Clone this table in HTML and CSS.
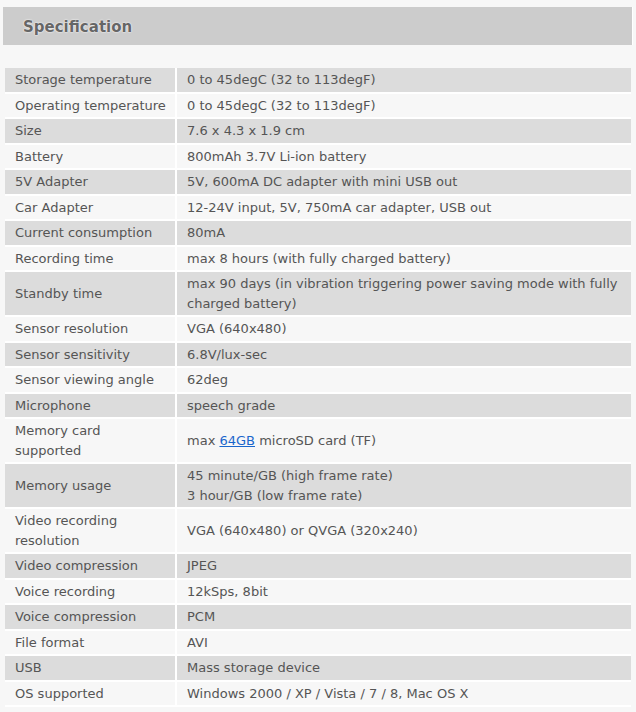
FILE: index.html
```html
<!DOCTYPE html>
<html>
<head>
<meta charset="utf-8">
<link rel="stylesheet" href="styles.css">
</head>
<body>
<h2 class="spec-title">Specification</h2>
<table class="spec-table">
<tr><td class="k">Storage temperature</td><td>0 to 45degC (32 to 113degF)</td></tr>
<tr><td class="k">Operating temperature</td><td>0 to 45degC (32 to 113degF)</td></tr>
<tr><td class="k">Size</td><td>7.6 x 4.3 x 1.9 cm</td></tr>
<tr><td class="k">Battery</td><td>800mAh 3.7V Li-ion battery</td></tr>
<tr><td class="k">5V Adapter</td><td>5V, 600mA DC adapter with mini USB out</td></tr>
<tr><td class="k">Car Adapter</td><td>12-24V input, 5V, 750mA car adapter, USB out</td></tr>
<tr><td class="k">Current consumption</td><td>80mA</td></tr>
<tr><td class="k">Recording time</td><td>max 8 hours (with fully charged battery)</td></tr>
<tr><td class="k">Standby time</td><td>max 90 days (in vibration triggering power saving mode with fully charged battery)</td></tr>
<tr><td class="k">Sensor resolution</td><td>VGA (640x480)</td></tr>
<tr><td class="k">Sensor sensitivity</td><td>6.8V/lux-sec</td></tr>
<tr><td class="k">Sensor viewing angle</td><td>62deg</td></tr>
<tr><td class="k">Microphone</td><td>speech grade</td></tr>
<tr><td class="k">Memory card<br>supported</td><td>max <a href="#" class="lnk">64GB</a> microSD card (TF)</td></tr>
<tr><td class="k">Memory usage</td><td>45 minute/GB (high frame rate)<br>3 hour/GB (low frame rate)</td></tr>
<tr><td class="k">Video recording<br>resolution</td><td>VGA (640x480) or QVGA (320x240)</td></tr>
<tr><td class="k">Video compression</td><td>JPEG</td></tr>
<tr><td class="k">Voice recording</td><td>12kSps, 8bit</td></tr>
<tr><td class="k">Voice compression</td><td>PCM</td></tr>
<tr><td class="k">File format</td><td>AVI</td></tr>
<tr><td class="k">USB</td><td>Mass storage device</td></tr>
<tr><td class="k">OS supported</td><td>Windows 2000 / XP / Vista / 7 / 8, Mac OS X</td></tr>
</table>
</body>
</html>
```
FILE: styles.css
```css
html, body {
  margin: 0;
  padding: 0;
  background: #f7f7f7;
}
body {
  font-family: "DejaVu Sans", Verdana, sans-serif;
  color: #555;
  font-size: 13px;
}
.spec-title {
  margin: 7px 3px 0 3px;
  height: 38px;
  box-sizing: border-box;
  padding: 10px 0 0 20px;
  background: #cccccc;
  border-right: 1px solid #fff;
  font-size: 15px;
  line-height: 20px;
  font-weight: bold;
  color: #666;
  text-shadow: 0 0 2px #fff, 0 0 1px #fff;
}
.spec-table {
  margin: 23px 0 0 5px;
  width: 626px;
  border-collapse: collapse;
}
.spec-table td {
  padding: 2px 10px 2px 10px;
  line-height: 19.5px;
  vertical-align: middle;
  border-bottom: 2px solid #fff;
}
.spec-table td.k {
  width: 156px;
  padding-right: 4px;
  white-space: nowrap;
  border-right: 2px solid #fff;
}
.spec-table tr:nth-child(odd) td {
  background: #dcdcdc;
}
.lnk {
  color: #1a66cc;
  text-decoration: underline;
}
```
